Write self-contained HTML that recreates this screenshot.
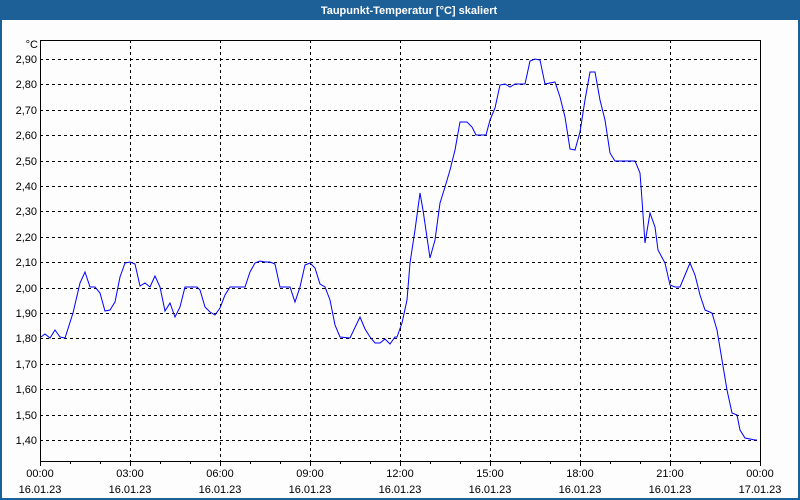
<!DOCTYPE html>
<html><head><meta charset="utf-8"><style>
html,body{margin:0;padding:0;width:800px;height:500px;overflow:hidden;background:#fcfdfc}
svg{display:block}
text{font-family:"Liberation Sans",sans-serif;font-size:11px;fill:#000}
</style></head><body>
<svg width="800" height="500" viewBox="0 0 800 500">
<rect x="0" y="0" width="800" height="500" fill="#1d5f97"/>
<rect x="2" y="20" width="796" height="478" fill="#fcfdfc"/>
<text x="409" y="14" text-anchor="middle" style="fill:#fff;font-weight:bold">Taupunkt-Temperatur [°C] skaliert</text>
<g stroke="#000" stroke-width="1" stroke-dasharray="3,3" fill="none">
<path d="M40 59.5H760M40 84.5H760M40 110.5H760M40 135.5H760M40 161.5H760M40 186.5H760M40 211.5H760M40 237.5H760M40 262.5H760M40 288.5H760M40 313.5H760M40 338.5H760M40 364.5H760M40 389.5H760M40 415.5H760M40 440.5H760"/>
<path d="M130.5 40V461M220.5 40V461M310.5 40V461M400.5 40V461M490.5 40V461M580.5 40V461M670.5 40V461"/>
</g>
<rect x="40.5" y="40.5" width="720" height="421" fill="none" stroke="#000"/>
<path stroke="#000" d="M40.5 461v5M70.5 461v3M100.5 461v3M130.5 461v5M160.5 461v3M190.5 461v3M220.5 461v5M250.5 461v3M280.5 461v3M310.5 461v5M340.5 461v3M370.5 461v3M400.5 461v5M430.5 461v3M460.5 461v3M490.5 461v5M520.5 461v3M550.5 461v3M580.5 461v5M610.5 461v3M640.5 461v3M670.5 461v5M700.5 461v3M730.5 461v3M760.5 461v5"/>
<g text-anchor="end">
<text x="38" y="48">°C</text>
<text x="37" y="63">2,90</text><text x="37" y="88">2,80</text><text x="37" y="114">2,70</text><text x="37" y="139">2,60</text><text x="37" y="165">2,50</text><text x="37" y="190">2,40</text><text x="37" y="215">2,30</text><text x="37" y="241">2,20</text><text x="37" y="266">2,10</text><text x="37" y="292">2,00</text><text x="37" y="317">1,90</text><text x="37" y="342">1,80</text><text x="37" y="368">1,70</text><text x="37" y="393">1,60</text><text x="37" y="419">1,50</text><text x="37" y="444">1,40</text>
</g>
<g text-anchor="middle">
<text x="40" y="477">00:00</text><text x="130" y="477">03:00</text><text x="220" y="477">06:00</text><text x="310" y="477">09:00</text><text x="400" y="477">12:00</text><text x="490" y="477">15:00</text><text x="580" y="477">18:00</text><text x="670" y="477">21:00</text><text x="760" y="477">00:00</text>
<text x="40" y="493">16.01.23</text><text x="130" y="493">16.01.23</text><text x="220" y="493">16.01.23</text><text x="310" y="493">16.01.23</text><text x="400" y="493">16.01.23</text><text x="490" y="493">16.01.23</text><text x="580" y="493">16.01.23</text><text x="670" y="493">16.01.23</text><text x="760" y="493">17.01.23</text>
</g>
<polyline fill="none" stroke="#0000ff" stroke-width="1" points="41,337 45,334 50,338 55,330 60,337 65,338 73,313 80,283 85,272 90,287 95,287 100,293 105,311 110,310 115,302 120,277 125,263 130,262 135,264 140,286 145,283 150,287 155,276 160,287 165,311 170,303 175,317 180,307 185,287 197,287 200,290 205,307 210,312 215,315 220,308 225,295 230,287 245,287 250,272 255,263 260,261 265,262 270,262 275,264 280,287 290,287 295,302 300,287 305,265 310,263 315,268 320,284 325,287 330,300 335,325 340,337 350,338 360,317 365,329 370,337 375,343 380,343 385,339 390,344 395,337 397,337 402,323 407,300 410,263 415,230 420,193 423,210 430,258 435,240 440,203 445,187 450,170 455,150 460,122 467,122 472,127 476,135 486,135 490,120 495,108 500,85 505,84 510,87 515,84 525,84 530,61 535,59 540,60 545,84 555,82 560,97 565,117 570,149 575,150 580,132 585,100 590,72 595,72 600,100 605,120 610,153 615,161 635,161 640,173 642,200 645,243 650,213 655,227 658,250 665,263 670,285 675,287 680,287 685,275 690,263 695,275 700,295 705,310 712,313 717,330 722,360 727,390 732,413 737,415 740,430 745,438 755,440 757,440"/>
</svg>
</body></html>
